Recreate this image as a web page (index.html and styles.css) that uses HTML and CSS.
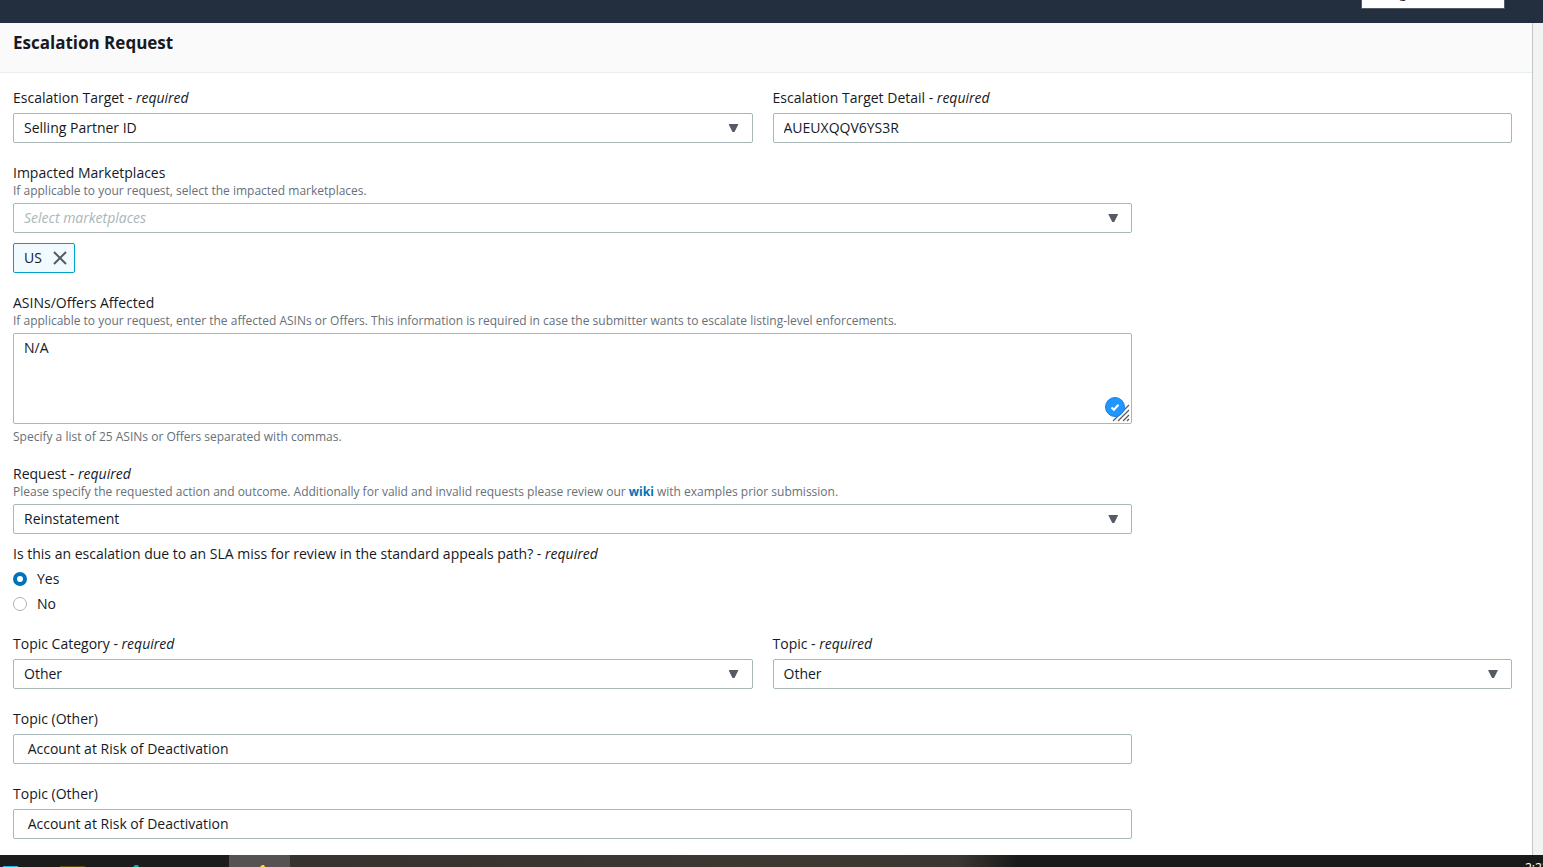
FILE: index.html
```html
<!DOCTYPE html>
<html lang="en">
<head>
    <meta charset="UTF-8">
    <meta name="viewport" content="width=device-width, initial-scale=1.0">
    <title>Escalation Request</title>
    <link rel="stylesheet" href="styles.css">
</head>
<body>

    <header class="topbar">
        <button type="button" class="lang-button">English</button>
    </header>

    <div class="page">
        <main class="panel">
            <div class="panel-header">
                <h1>Escalation Request</h1>
            </div>

            <form class="form">
                <!-- Target -->
                <div class="field half">
                    <label for="target">Escalation Target - <i>required</i></label>
                    <div class="select">
                        <select id="target"><option>Selling Partner ID</option></select>
                    </div>
                </div>
                <div class="field half">
                    <label for="target-detail">Escalation Target Detail - <i>required</i></label>
                    <input type="text" id="target-detail" value="AUEUXQQV6YS3R">
                </div>

                <!-- Marketplaces -->
                <div class="field wide">
                    <label for="marketplaces">Impacted Marketplaces</label>
                    <p class="hint">If applicable to your request, select the impacted marketplaces.</p>
                    <div class="select">
                        <select id="marketplaces" class="placeholder"><option>Select marketplaces</option></select>
                    </div>
                    <div class="token">
                        <span>US</span>
                        <button type="button" aria-label="Remove US">
                            <svg width="14" height="14" viewBox="0 0 14 14"><path d="M1 1l12 12M13 1L1 13" stroke="#545b64" stroke-width="2" fill="none"/></svg>
                        </button>
                    </div>
                </div>

                <!-- ASINs -->
                <div class="field wide">
                    <label for="asins">ASINs/Offers Affected</label>
                    <p class="hint">If applicable to your request, enter the affected ASINs or Offers. This information is required in case the submitter wants to escalate listing-level enforcements.</p>
                    <div class="textarea">
                        <textarea id="asins">N/A</textarea>
                        <svg class="grip" width="20" height="20" viewBox="0 0 20 20"><path d="M2 18L18 2M7 18L18 7M12 18l6-6M16 18l2-2" stroke="#545b64" stroke-width="1.2" fill="none"/></svg>
                        <svg class="checker" width="20" height="20" viewBox="0 0 20 20"><circle cx="10" cy="10" r="9.5" fill="#2196ff" stroke="#1c7de6"/><path d="M6.5 10.5l2.4 2.3 4.6-5" stroke="#fff" stroke-width="2" fill="none"/></svg>
                    </div>
                    <p class="hint below">Specify a list of 25 ASINs or Offers separated with commas.</p>
                </div>

                <!-- Request -->
                <div class="field wide">
                    <label for="request">Request - <i>required</i></label>
                    <p class="hint">Please specify the requested action and outcome. Additionally for valid and invalid requests please review our <a href="#">wiki</a> with examples prior submission.</p>
                    <div class="select">
                        <select id="request"><option>Reinstatement</option></select>
                    </div>
                    <fieldset>
                        <legend>Is this an escalation due to an SLA miss for review in the standard appeals path? - <i>required</i></legend>
                        <label class="radio"><input type="radio" name="sla" value="yes" checked>Yes</label>
                        <label class="radio"><input type="radio" name="sla" value="no">No</label>
                    </fieldset>
                </div>

                <!-- Topic -->
                <div class="field half">
                    <label for="category">Topic Category - <i>required</i></label>
                    <div class="select">
                        <select id="category"><option>Other</option></select>
                    </div>
                </div>
                <div class="field half">
                    <label for="topic">Topic - <i>required</i></label>
                    <div class="select">
                        <select id="topic"><option>Other</option></select>
                    </div>
                </div>
                <div class="field wide">
                    <label for="topic-other">Topic (Other)</label>
                    <input type="text" id="topic-other" value=" Account at Risk of Deactivation">
                </div>
                <div class="field wide">
                    <label for="topic-other-2">Topic (Other)</label>
                    <input type="text" id="topic-other-2" value=" Account at Risk of Deactivation">
                </div>
            </form>
        </main>
    </div>

    <footer class="taskbar">
        <svg width="290" height="12" viewBox="0 0 290 12">
            <rect x="229" width="61" height="12" fill="#555251"/>
            <rect x="3" y="11" width="15" height="1" fill="#22b8f0"/>
            <rect x="60" y="11" width="25" height="1" fill="#5a4a10"/>
            <path d="M133 12l2-2h3l1 2z" fill="#1aa6a6"/>
            <path d="M260 12l2-2h2l1 2z" fill="#f5dc3c"/>
        </svg>
        <span class="clock">2:23 PM</span>
    </footer>

</body>
</html>
```

FILE: styles.css
```css
* {
    box-sizing: border-box;
}
body {
    margin: 0;
    height: 100vh;
    display: flex;
    flex-direction: column;
    overflow: hidden;
    font-family: "Open Sans", "Noto Sans", sans-serif;
    font-size: 14px;
    line-height: 20px;
    color: #16191f;
    background-color: #f2f3f3;
}
input, select, textarea, button {
    font: inherit;
    color: inherit;
}

/* top bar */
.topbar {
    flex: none;
    display: flex;
    justify-content: flex-end;
    align-items: flex-end;
    height: 23px;
    padding: 0 38px 14px 0;
    overflow: hidden;
    background-color: #232f3e;
}
.lang-button {
    flex: none;
    width: 144px;
    height: 32px;
    padding: 0 22px;
    font-size: 13px;
    text-align: left;
    background-color: #fff;
    border: 1px solid #545b64;
}

/* panel */
.page {
    flex: 1;
    min-height: 0;
    padding-right: 10px;
    overflow: hidden;
}
.panel {
    min-height: 100%;
    background-color: #fff;
    border-right: 1px solid #c3c7cb;
}
.panel-header {
    height: 50px;
    padding: 8px 13px;
    background-color: #fafafa;
    border-bottom: 1px solid #eaeded;
}
h1 {
    margin: 0;
    font-size: 17px;
    line-height: 24px;
    font-weight: bold;
}
.form {
    display: grid;
    grid-template-columns: repeat(4, 1fr);
    gap: 20px;
    padding: 15px 20px 15px 13px;
}
.half {
    grid-column: span 2;
}
.wide {
    grid-column: 1 / span 3;
}

/* fields */
.field > label {
    display: block;
}
.hint {
    margin: 0;
    font-size: 12px;
    line-height: 15px;
    color: #687078;
}
.hint a {
    color: #0073bb;
    font-weight: bold;
    text-decoration: none;
}
.hint.below {
    margin-top: 5px;
}
input[type="text"], select, textarea {
    display: block;
    width: 100%;
    height: 30px;
    margin: 5px 0 0;
    padding: 0 10px;
    background-color: #fff;
    border: 1px solid #aab7b8;
    border-radius: 2px;
}
input[type="text"] {
    padding-bottom: 2px;
}
select {
    appearance: none;
}
select.placeholder {
    color: #aab7b8;
    font-style: italic;
}
.select, .textarea {
    position: relative;
}
.select::after {
    content: "";
    position: absolute;
    right: 14px;
    top: 11px;
    width: 10px;
    height: 8px;
    background-color: #545b64;
    clip-path: polygon(0 0, 100% 0, 60% 100%, 40% 100%);
    pointer-events: none;
}
textarea {
    height: 91px;
    padding: 4px 10px;
    resize: none;
}
.grip {
    position: absolute;
    right: 1px;
    bottom: 1px;
}
.checker {
    position: absolute;
    right: 7px;
    bottom: 7px;
}

/* selected marketplace */
.token {
    display: inline-flex;
    align-items: center;
    gap: 11px;
    height: 30px;
    margin-top: 10px;
    padding: 0 7px 0 10px;
    background-color: #f1faff;
    border: 1px solid #00a1c9;
    border-radius: 2px;
    vertical-align: top;
}
.token button {
    display: flex;
    padding: 0;
    background: none;
    border: 0;
}

/* radios */
fieldset {
    margin: 10px 0 0;
    padding: 0;
    border: 0;
}
legend {
    padding: 0;
}
.radio {
    display: flex;
    align-items: center;
    gap: 10px;
    margin-top: 5px;
}
.radio input {
    appearance: none;
    width: 14px;
    height: 14px;
    margin: 0;
    background-color: #fff;
    border: 1px solid #aab7b8;
    border-radius: 50%;
}
.radio input:checked {
    border: 4px solid #0073bb;
}

/* desktop taskbar */
.taskbar {
    flex: none;
    display: flex;
    justify-content: space-between;
    height: 12px;
    overflow: hidden;
    background: linear-gradient(to right, #1c1c1c 18%, #37322f 18%, #3d3832 52%, #3b3631 62%, #1a1a1a 66%);
}
.taskbar svg {
    background-color: #1c1c1c;
}
.clock {
    width: 18px;
    padding-top: 5px;
    font-size: 12px;
    line-height: 16px;
    white-space: nowrap;
    color: #fff;
}
```
